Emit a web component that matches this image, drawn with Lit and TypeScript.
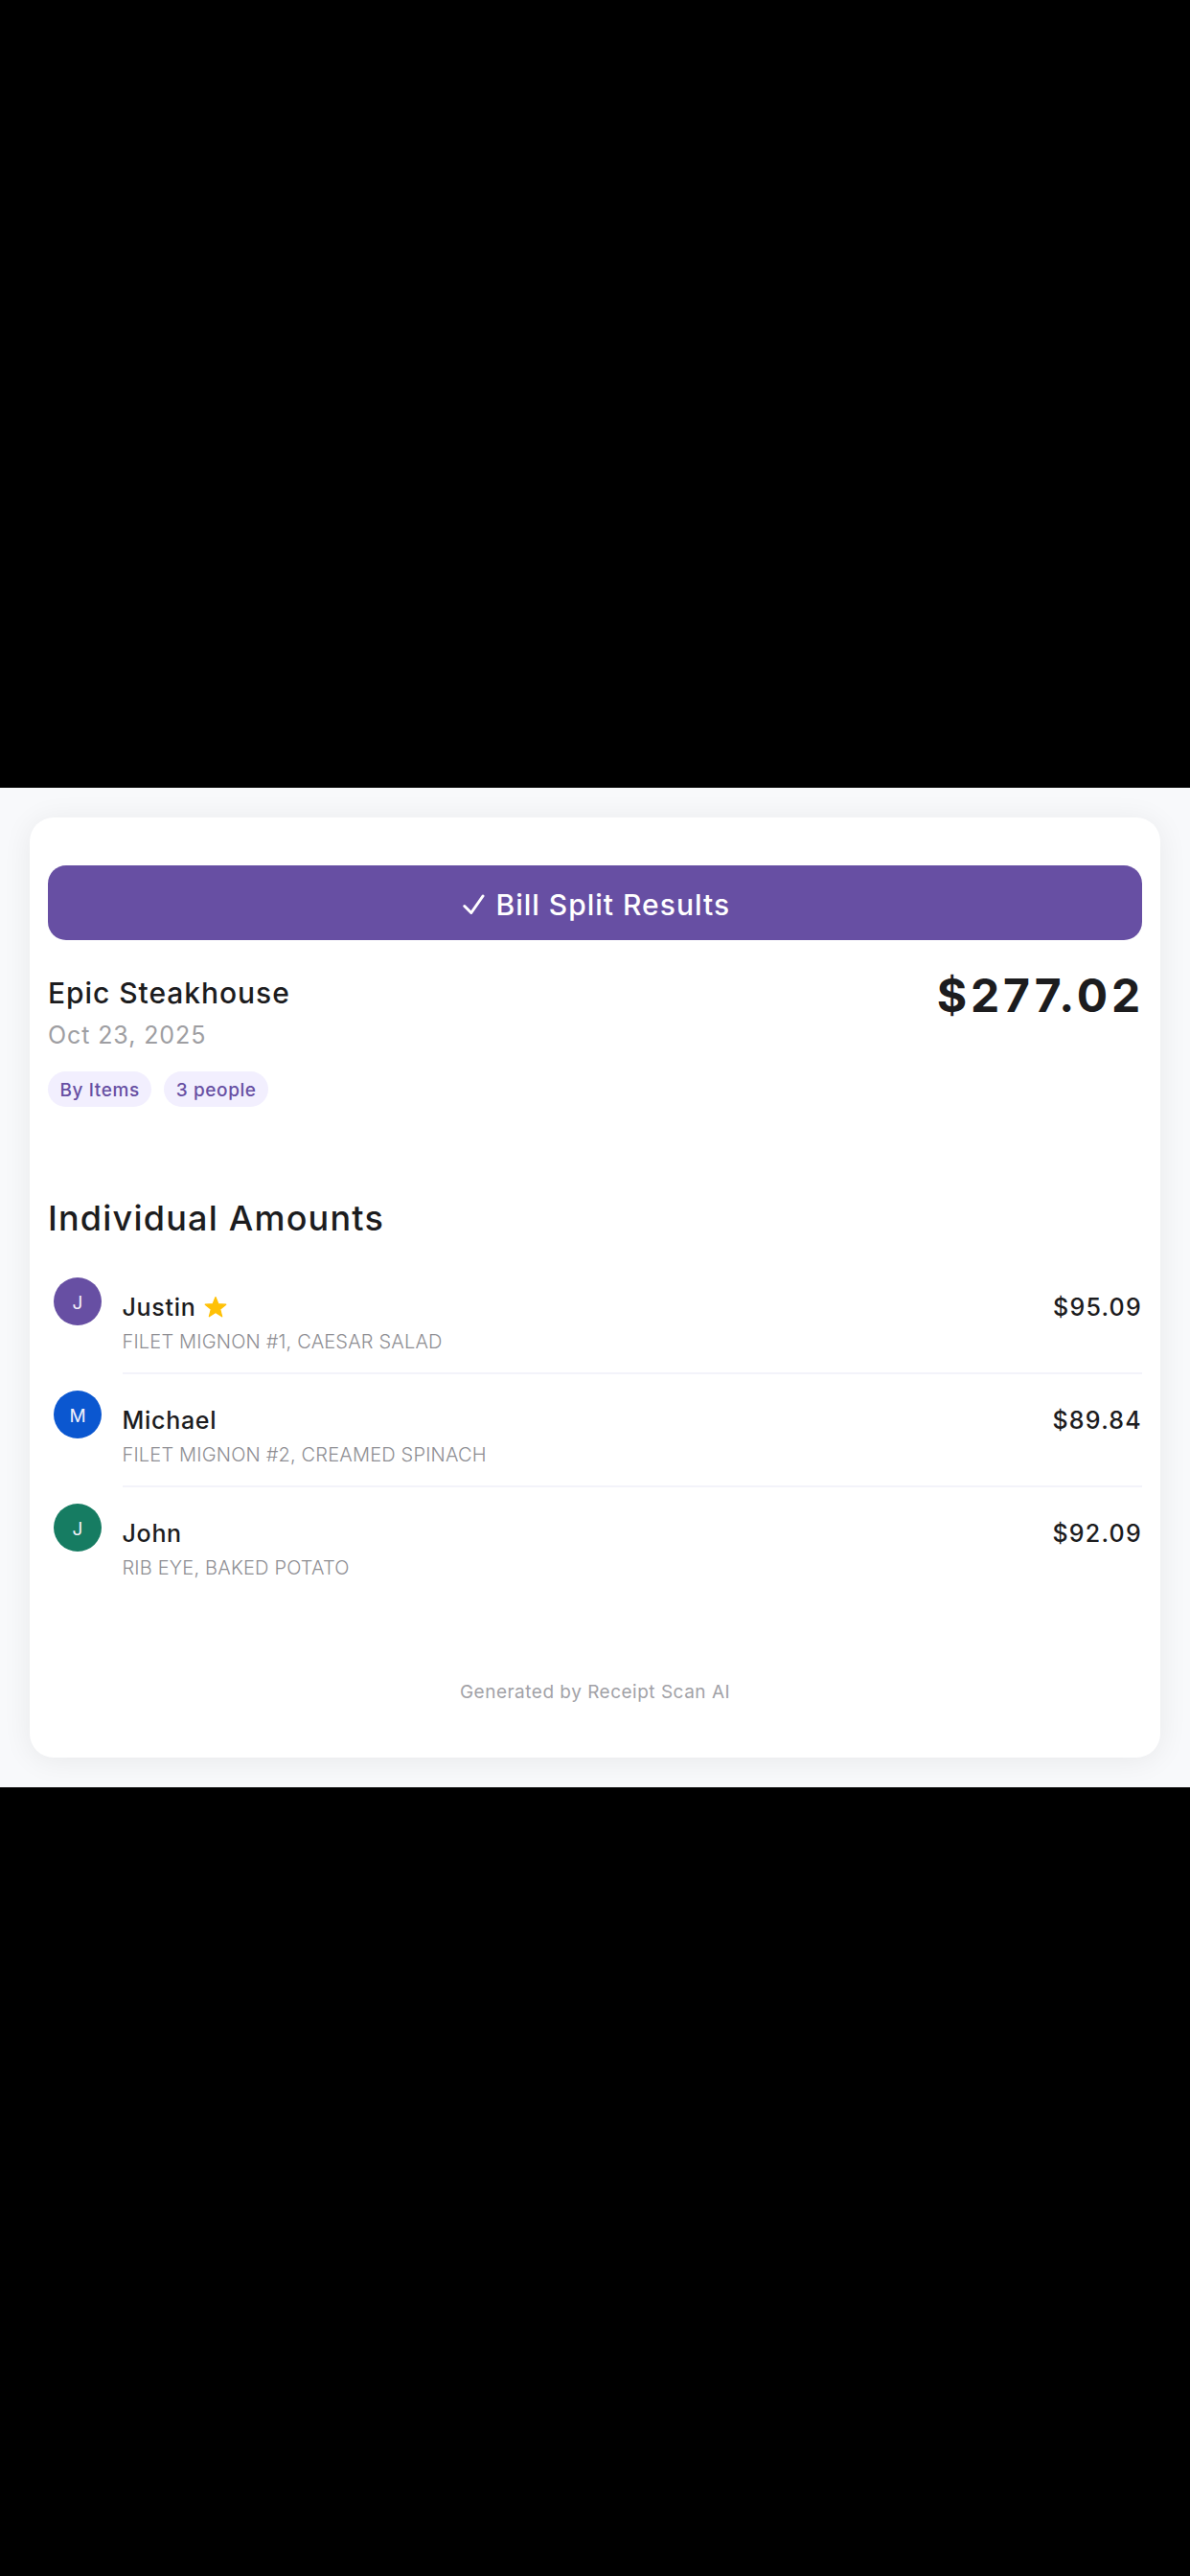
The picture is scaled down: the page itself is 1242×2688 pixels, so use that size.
import { LitElement, html, css } from 'lit';
import { customElement, property } from 'lit/decorators.js';

interface Share {
  name: string;
  items: string;
  amount: string;
  color: string;
  payer?: boolean;
}

const shares: Share[] = [
  {
    name: 'Justin',
    items: 'FILET MIGNON #1, CAESAR SALAD',
    amount: '$95.09',
    color: '#674fa3',
    payer: true,
  },
  {
    name: 'Michael',
    items: 'FILET MIGNON #2, CREAMED SPINACH',
    amount: '$89.84',
    color: '#0b57d0',
  },
  {
    name: 'John',
    items: 'RIB EYE, BAKED POTATO',
    amount: '$92.09',
    color: '#167c62',
  },
];

@customElement('share-row')
export class ShareRow extends LitElement {
  @property({ attribute: false })
  share!: Share;

  static styles = css`
    :host {
      display: flex;
      gap: 21.5px;
      height: 118px;
      padding-left: 6px;
      box-sizing: border-box;
    }
    .avatar {
      flex: none;
      width: 50px;
      height: 50px;
      box-sizing: border-box;
      padding-top: 4px;
      border-radius: 50%;
      color: #f4f1fa;
      font-size: 19px;
      line-height: 46px;
      text-align: center;
    }
    .body {
      flex: 1;
      display: flex;
      justify-content: space-between;
      height: 101px;
      box-sizing: border-box;
      padding-top: 16px;
      border-bottom: 2px solid #f3f3fa;
    }
    :host([last]) .body {
      border-bottom: none;
    }
    .name {
      display: flex;
      align-items: center;
      gap: 9px;
      font-size: 25px;
      line-height: 30px;
      font-weight: 500;
      letter-spacing: 0.7px;
    }
    .star {
      width: 24px;
      height: 24px;
    }
    .items {
      margin-top: 9px;
      font-size: 20px;
      line-height: 24px;
      font-weight: 300;
      letter-spacing: 0.18px;
      color: #8e8e93;
    }
    .amount {
      font-size: 25px;
      line-height: 30px;
      font-weight: 500;
      letter-spacing: 1.25px;
    }
  `;

  render() {
    const { name, items, amount, color, payer } = this.share;
    return html`
      <div class="avatar" style="background:${color}">${name[0]}</div>
      <div class="body">
        <div>
          <div class="name">
            ${name}
            ${payer
              ? html`<svg class="star" viewBox="0 0 24 24">
                  <path
                    fill="#ffc107"
                    stroke="#ffc107"
                    stroke-width="1.2"
                    stroke-linejoin="round"
                    d="M12 1.6l2.9 7.1 7.9.5-6.1 5 2 7.6L12 17.6l-6.7 4.2 2-7.6-6.1-5 7.9-.5z"
                  />
                </svg>`
              : ''}
          </div>
          <div class="items">${items}</div>
        </div>
        <div class="amount">${amount}</div>
      </div>
    `;
  }
}

@customElement('app-root')
export class AppRoot extends LitElement {
  static styles = css`
    :host {
      display: block;
      width: 1242px;
      height: 2688px;
      box-sizing: border-box;
      padding-top: 822px;
      background: #000;
      color: #1c1c1e;
      font-family: Inter, 'Liberation Sans', sans-serif;
    }
    .panel {
      height: 1043px;
      box-sizing: border-box;
      padding: 31px;
      background: #f8f9fb;
      overflow: hidden;
    }
    .card {
      height: 981px;
      box-sizing: border-box;
      padding: 49.5px 19px 0;
      border-radius: 25px;
      background: #fff;
      box-shadow: 0 3px 31px rgba(0, 0, 0, 0.07);
    }
    .banner {
      display: flex;
      justify-content: center;
      align-items: center;
      gap: 11.5px;
      height: 78px;
      box-sizing: border-box;
      padding: 5.5px 0 0 3px;
      border-radius: 19px;
      background: #674fa3;
      color: #fff;
      font-size: 30px;
      font-weight: 500;
      letter-spacing: 1px;
    }
    .check {
      width: 23px;
      height: 22px;
    }
    .summary {
      display: flex;
      justify-content: space-between;
      margin-top: 29px;
    }
    .place {
      margin-top: 8px;
      font-size: 30px;
      line-height: 36px;
      font-weight: 500;
      letter-spacing: 0.95px;
    }
    .date {
      margin-top: 11px;
      font-size: 25px;
      line-height: 30px;
      font-weight: 400;
      letter-spacing: 0.9px;
      color: #9e9ea2;
    }
    .tags {
      display: flex;
      gap: 13px;
      margin-top: 23.5px;
    }
    .tag {
      height: 37px;
      box-sizing: border-box;
      padding: 2px 12.5px 0;
      border-radius: 19px;
      background: #f2effe;
      color: #674fa3;
      font-size: 19px;
      line-height: 35px;
      font-weight: 500;
      letter-spacing: 0.6px;
    }
    .total {
      margin-right: -2px;
      font-size: 48px;
      line-height: 58px;
      font-weight: 700;
      letter-spacing: 3.8px;
    }
    .heading {
      margin: 94px 0 40px;
      font-size: 36px;
      line-height: 44px;
      font-weight: 500;
      letter-spacing: 1.2px;
    }
    .footer {
      margin-top: 67px;
      font-size: 19px;
      line-height: 24px;
      letter-spacing: 0.5px;
      text-align: center;
      color: #a2a2a7;
    }
  `;

  render() {
    return html`
      <div class="panel">
        <div class="card">
          <div class="banner">
            <svg class="check" viewBox="0 0 23 22">
              <path
                d="M1.8 12.5l7 7L21 2"
                fill="none"
                stroke="#fff"
                stroke-width="3"
                stroke-linecap="round"
                stroke-linejoin="round"
              />
            </svg>
            <span>Bill Split Results</span>
          </div>
          <div class="summary">
            <div>
              <div class="place">Epic Steakhouse</div>
              <div class="date">Oct 23, 2025</div>
              <div class="tags">
                <span class="tag">By Items</span>
                <span class="tag">3 people</span>
              </div>
            </div>
            <div class="total">$277.02</div>
          </div>
          <div class="heading">Individual Amounts</div>
          ${shares.map(
            (share, i) => html`<share-row
              .share=${share}
              ?last=${i === shares.length - 1}
            ></share-row>`
          )}
          <div class="footer">Generated by Receipt Scan AI</div>
        </div>
      </div>
    `;
  }
}
